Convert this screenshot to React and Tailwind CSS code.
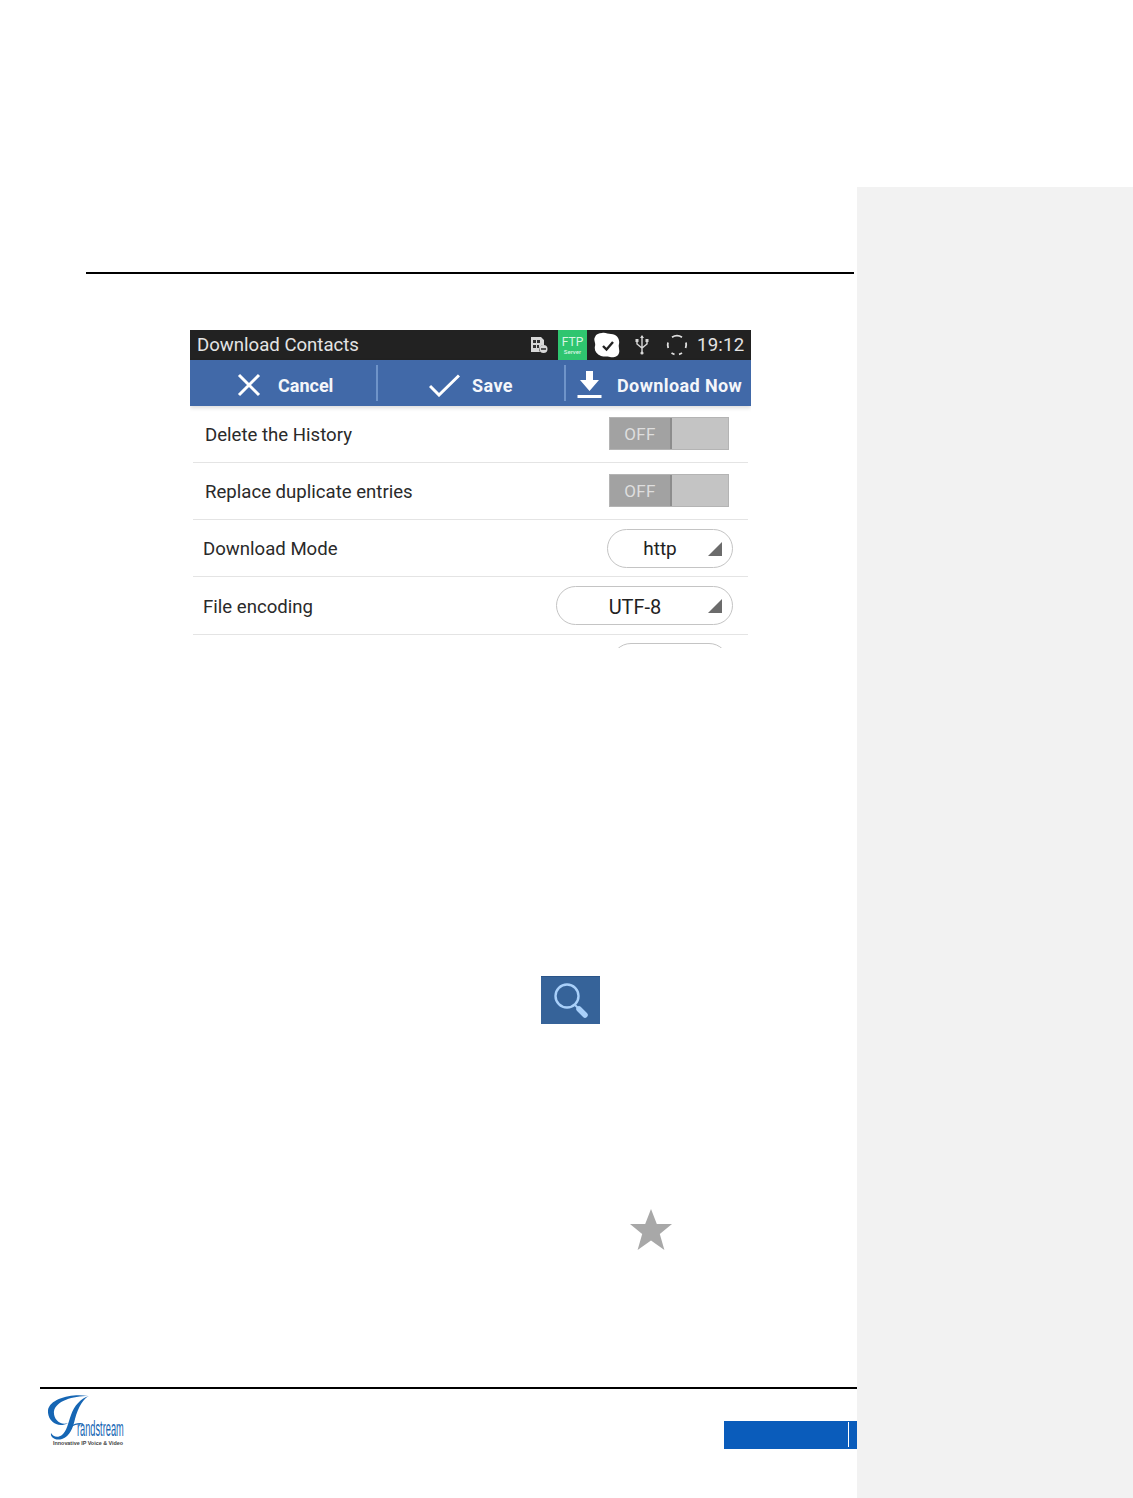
const font = { fontFamily: "Roboto, sans-serif" };

function StatusBar() {
  return (
    <div className="flex h-[30px] items-center bg-[#222222] pl-[7px] text-[18.6px] text-[#e4e4e4]">
      <span className="pt-[2px]">Download Contacts</span>
      <svg className="ml-[171px]" width="18" height="18" viewBox="0 0 18 18">
        <path d="M1 1h10l3 3v5a4.5 4.5 0 0 0-4 7H1z" fill="#d8d8d8" />
        <path d="M3 4h3v3H3zM7 4h3v3H7zM3 9h3v3H3zM7 9h2v3H7z" fill="#333" />
        <circle cx="13.5" cy="13" r="4" fill="#d8d8d8" />
        <rect x="11" y="12.2" width="5" height="1.6" fill="#333" />
      </svg>
      <div className="ml-[10px] flex h-[30px] w-[29px] flex-col items-center bg-[#2fc56f] pt-[7px] text-[#d9f5e4]">
        <span className="text-[12px] leading-[11px]">FTP</span>
        <span className="text-[6px] font-medium leading-[7px]">Server</span>
      </div>
      <svg className="ml-[7px]" width="27" height="27" viewBox="0 0 27 27">
        <path d="M8 1c3-1 6 1 9 1 6 0 9 5 8 10-1 3 1 6 0 9-1 4-6 5-9 4-3-1-6 0-9-1-5-2-7-6-6-10 1-3-2-6 0-9 1-3 4-4 7-4z" fill="#ffffff" />
        <path d="M9 14l3.5 3.5L19 10" fill="none" stroke="#222222" strokeWidth="2.4" />
      </svg>
      <svg className="ml-[13px]" width="16" height="20" viewBox="0 0 16 20" fill="none" stroke="#d8d8d8" strokeWidth="1.4">
        <path d="M8 1v18M3 6v3l5 4 5-4V6" />
        <path d="M8 0l2 3H6z" fill="#d8d8d8" stroke="none" />
        <rect x="1.5" y="4" width="3" height="3" fill="#d8d8d8" stroke="none" />
        <rect x="11.5" y="4" width="3" height="3" fill="#d8d8d8" stroke="none" />
        <circle cx="8" cy="18" r="1.6" fill="#d8d8d8" stroke="none" />
      </svg>
      <svg className="ml-[16px]" width="22" height="22" viewBox="0 0 22 22" fill="none" stroke="#e0e0e0" strokeWidth="1.8">
        <path d="M6 3.2A9.5 9.5 0 0 1 16 3.2" />
        <path d="M20 8.5A9.5 9.5 0 0 1 19.6 14" />
        <path d="M16 19A9.5 9.5 0 0 1 13 20.3" />
        <path d="M8.5 20.3A9.5 9.5 0 0 1 5.5 19" />
        <path d="M2.2 14A9.5 9.5 0 0 1 2 8.5" />
      </svg>
      <span className="ml-[9px] pt-[2px] text-[18.6px] tracking-[0.2px]">19:12</span>
    </div>
  );
}

function ActionBar() {
  return (
    <div className="flex h-[46px] items-center bg-[#4169a8] text-[18px] font-bold text-[#f4f6fa] shadow-[0_2px_4px_rgba(0,0,0,0.14)]">
      <div className="flex h-[36px] w-[188px] items-center border-r-2 border-[#6f94c9] pl-[47px]">
        <svg className="mt-[4px]" width="24" height="24" viewBox="0 0 24 24" fill="none" stroke="#ffffff" strokeWidth="3">
          <path d="M2 2l20 20M22 2L2 22" />
        </svg>
        <span className="ml-[17px] pt-[4px]">Cancel</span>
      </div>
      <div className="flex h-[36px] w-[188px] items-center border-r-2 border-[#6f94c9] pl-[51px]">
        <svg className="mt-[4px]" width="31" height="23" viewBox="0 0 31 23" fill="none" stroke="#ffffff" strokeWidth="3">
          <path d="M1 12l9 9L30 1.5" />
        </svg>
        <span className="ml-[12px] pt-[4px] tracking-[0.4px]">Save</span>
      </div>
      <div className="flex items-center pl-[11px]">
        <svg className="mt-[2px]" width="25" height="27" viewBox="0 0 25 27" fill="#ffffff">
          <path d="M9 0h7v9h6L12.5 20 3 9h6z" />
          <rect x="0.5" y="24" width="24" height="3" />
        </svg>
        <span className="ml-[15px] whitespace-nowrap pt-[4px] tracking-[0.4px]">Download Now</span>
      </div>
    </div>
  );
}

function Toggle() {
  return (
    <div className="-mt-[2px] flex h-[33px] w-[120px] border border-[#b4b4b4] bg-[#c4c4c4]">
      <div className="flex w-[62px] items-center justify-center border-r-2 border-[#8c8c8c] bg-[#a2a2a2] pt-[4px] text-[17px] tracking-[0.4px] text-[#dedede]">
        OFF
      </div>
    </div>
  );
}

function Select({ value, width, textWidth, textSize }) {
  return (
    <div className={`relative flex h-[39px] items-center rounded-[20px] border border-[#c4c4c4] bg-white text-[#222222] ${width}`}>
      <span className={`pt-[2px] text-center ${textWidth} ${textSize}`}>{value}</span>
      <div className="absolute right-[10px] top-[12px] h-0 w-0 border-b-[14px] border-l-[14px] border-b-[#6b6b6b] border-l-transparent" />
    </div>
  );
}

function Row({ label, pad, height, children }) {
  return (
    <div className={`mx-[3px] flex items-center justify-between border-b border-[#e4e4e4] ${pad} ${height}`}>
      <span className="pt-[4px]">{label}</span>
      {children}
    </div>
  );
}

function Screen() {
  return (
    <div className="ml-[190px] mt-[56px] h-[318px] w-[561px] overflow-hidden bg-white text-[18.6px] text-[#2a2a2a]">
      <StatusBar />
      <ActionBar />
      <Row label="Delete the History" pad="pl-[12px] pr-[19px]" height="h-[57px]">
        <Toggle />
      </Row>
      <Row label="Replace duplicate entries" pad="pl-[12px] pr-[19px]" height="h-[57px]">
        <Toggle />
      </Row>
      <Row label="Download Mode" pad="pl-[10px] pr-[15px]" height="h-[57px]">
        <Select value="http" width="w-[126px]" textWidth="w-[104px]" textSize="text-[19px]" />
      </Row>
      <Row label="File encoding" pad="pl-[10px] pr-[15px]" height="h-[58px]">
        <Select value="UTF-8" width="w-[177px]" textWidth="w-[156px]" textSize="text-[20px]" />
      </Row>
      <div className="mt-[8px] flex justify-end pr-[22px]">
        <div className="h-[40px] w-[118px] rounded-[20px] border border-[#c4c4c4]" />
      </div>
    </div>
  );
}

function Logo() {
  return (
    <div className="relative ml-[8px] mt-[6px] h-[52px] w-[80px]">
      <svg className="absolute left-0 top-0" width="44" height="46" viewBox="0 0 44 46" fill="#1666b4">
        <path d="M40 1C25-2 2 3 0 15c-1 11 10 19 20 13-8 3-15-4-14-12C8 6 25 1 40 1z" />
        <path d="M41 1c-5 2-11 11-14 23-2 9-5 17-13 20-7 2-12-2-11-6 2 4 7 5 11 2 5-4 6-12 9-20C26 11 33 3 41 1z" />
        <path d="M22 32c5-3 9-4 13-3" fill="none" stroke="#1666b4" strokeWidth="1.2" />
      </svg>
      <span className="absolute left-[29px] top-[23px] origin-left scale-x-[0.42] whitespace-nowrap text-[22px] leading-[22px] text-[#1666b4]" style={{ fontFamily: "'Liberation Sans', sans-serif" }}>
        randstream
      </span>
      <span className="absolute left-[5px] top-[45px] whitespace-nowrap text-[5.4px] font-bold leading-[7px] text-[#444444]" style={{ fontFamily: "'Liberation Sans', sans-serif" }}>
        Innovative IP Voice &amp; Video
      </span>
    </div>
  );
}

function Footer() {
  return (
    <div className="ml-[40px] border-t-2 border-black">
      <div className="flex">
        <Logo />
        <div className="ml-auto mt-[32px] flex h-[28px] w-[133px] bg-[#0a5cbb]">
          <div className="ml-[124px] mt-[1px] h-[25px] w-px bg-white" />
        </div>
      </div>
    </div>
  );
}

export default function App() {
  return (
    <div className="flex h-[1498px] w-[1133px] overflow-hidden bg-white" style={font}>
      <main className="w-[857px]">
        <div className="ml-[86px] mr-[3px] mt-[272px] border-t-2 border-black" />
        <Screen />
        <div className="ml-[541px] mt-[328px] flex h-[48px] w-[59px] items-center justify-center border-t border-[#2a5488] bg-[#366399]">
          <svg width="40" height="40" viewBox="0 0 40 40" fill="none" stroke="#a9d0fa">
            <circle cx="16" cy="15" r="11.5" strokeWidth="2.4" />
            <path d="M24 24l3 3" strokeWidth="2" />
            <path d="M28 28l6 6" strokeWidth="5.5" strokeLinecap="round" />
          </svg>
        </div>
        <div className="ml-[630px] mt-[185px] h-[42px] w-[42px]">
          <svg width="42" height="42" viewBox="0 0 42 42" fill="#a8a8a8">
            <path d="M21 0l5.8 15H42L29.8 25l4.6 16L21 31.5 7.6 41l4.6-16L0 15h15.2z" />
          </svg>
        </div>
        <div className="mt-[136px]">
          <Footer />
        </div>
      </main>
      <aside className="mt-[187px] h-[1311px] w-[276px] bg-[#f2f2f2]" />
    </div>
  );
}
